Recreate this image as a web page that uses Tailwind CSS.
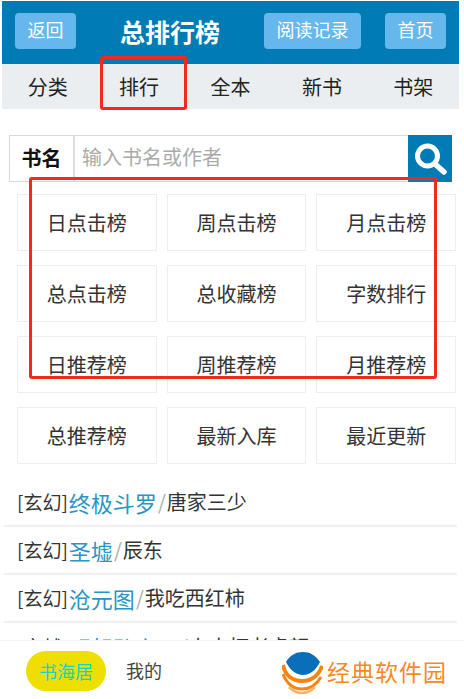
<!DOCTYPE html>
<html lang="zh">
<head>
<meta charset="utf-8">
<script src="https://cdn.jsdelivr.net/npm/@tailwindcss/browser@4"></script>
</head>
<body class="bg-white">
<div class="relative w-[464px] h-[699px] overflow-hidden font-['Noto_Sans_CJK_SC','Noto_Sans',sans-serif] text-[#333]">
  <div class="ml-[2px] mt-[1px] w-[457px] h-[63px] bg-[#007bb3] flex items-start pt-[12px]">
    <div class="ml-[13px] w-[61px] h-[36px] rounded-[4px] bg-[#66b8ec] text-white text-[18px] pb-[3px] flex items-center justify-center">返回</div>
    <div class="ml-[44px] w-[100px] h-[36px] text-white text-[25px] font-bold leading-[36px] text-center">总排行榜</div>
    <div class="ml-[44px] w-[97px] h-[36px] rounded-[4px] bg-[#66b8ec] text-white text-[18px] pb-[3px] flex items-center justify-center">阅读记录</div>
    <div class="ml-[24px] w-[61px] h-[36px] rounded-[4px] bg-[#66b8ec] text-white text-[18px] pb-[3px] flex items-center justify-center">首页</div>
  </div>
  <div class="ml-[2px] w-[457px] h-[45px] bg-[#ebeef0] grid grid-cols-5 text-[20px] text-[#222] items-center text-center leading-[43px]">
    <div>分类</div><div>排行</div><div>全本</div><div>新书</div><div>书架</div>
  </div>
  <div class="ml-[9px] mt-[26px] w-[443px] h-[47px] flex border border-[#d9d9d9]">
    <div class="w-[65px] shrink-0 border-r-2 border-[#ddd] pb-[2px] flex items-center justify-center text-[20px] font-bold text-[#111]">书名</div>
    <div class="flex-1 flex items-center pl-[7px] pb-[3px] text-[20px] text-[#aaa]">输入书名或作者</div>
    <div class="w-[44px] shrink-0 -my-px -mr-px bg-[#007bb3] flex items-center justify-center">
      <svg width="36" height="36" viewBox="0 0 36 36" fill="none">
        <circle cx="15.5" cy="15" r="10" stroke="#fff" stroke-width="5"/>
        <path d="M23 23l9 8" stroke="#fff" stroke-width="5.5" stroke-linecap="round"/>
      </svg>
    </div>
  </div>
  <div class="ml-[17px] mt-[12px] w-[439px] grid grid-cols-3 gap-x-[10px] gap-y-[14px] text-[20px] text-[#333]">
    <div class="h-[57px] border border-[#eee] flex items-center justify-center">日点击榜</div>
    <div class="h-[57px] border border-[#eee] flex items-center justify-center">周点击榜</div>
    <div class="h-[57px] border border-[#eee] flex items-center justify-center">月点击榜</div>
    <div class="h-[57px] border border-[#eee] flex items-center justify-center">总点击榜</div>
    <div class="h-[57px] border border-[#eee] flex items-center justify-center">总收藏榜</div>
    <div class="h-[57px] border border-[#eee] flex items-center justify-center">字数排行</div>
    <div class="h-[57px] border border-[#eee] flex items-center justify-center">日推荐榜</div>
    <div class="h-[57px] border border-[#eee] flex items-center justify-center">周推荐榜</div>
    <div class="h-[57px] border border-[#eee] flex items-center justify-center">月推荐榜</div>
    <div class="h-[57px] border border-[#eee] flex items-center justify-center">总推荐榜</div>
    <div class="h-[57px] border border-[#eee] flex items-center justify-center">最新入库</div>
    <div class="h-[57px] border border-[#eee] flex items-center justify-center">最近更新</div>
  </div>
  <div class="ml-[4px] mt-[15px] w-[453px] text-[20px]">
    <div class="h-[48px] border-b-2 border-[#f0f0f0] pl-[13px] flex items-center"><span class="text-[19px] mr-[1px]">[玄幻]</span><span class="text-[22px] text-[#2a95c5]">终极斗罗</span><span class="text-[#aaa] mx-[1px]">/</span><span>唐家三少</span></div>
    <div class="h-[48px] border-b-2 border-[#f0f0f0] pl-[13px] flex items-center"><span class="text-[19px] mr-[1px]">[玄幻]</span><span class="text-[22px] text-[#2a95c5]">圣墟</span><span class="text-[#aaa] mx-[1px]">/</span><span>辰东</span></div>
    <div class="h-[48px] border-b-2 border-[#f0f0f0] pl-[13px] flex items-center"><span class="text-[19px] mr-[1px]">[玄幻]</span><span class="text-[22px] text-[#2a95c5]">沧元图</span><span class="text-[#aaa] mx-[1px]">/</span><span>我吃西红柿</span></div>
    <div class="h-[48px] pl-[13px] flex items-center"><span class="text-[19px] mr-[1px]">[穿越]</span><span class="text-[22px] text-[#2a95c5]">明朝败家子</span><span class="text-[#aaa] mx-[1px]">/</span><span>上山打老虎额</span></div>
  </div>
  <div class="absolute left-0 top-[640px] w-[464px] h-[59px] bg-white border-t border-[#f3f3f3] flex items-center">
    <div class="ml-[26px] mt-[2px] w-[80px] h-[40px] rounded-full bg-[#efdf00] text-[#14d4c8] text-[18px] flex items-center justify-center">书海居</div>
    <div class="ml-[20px] text-[18px] text-[#444]">我的</div>
    <div class="ml-auto mr-[17px] mt-[6px] flex items-center gap-[4px]">
      <svg width="41" height="44" viewBox="0 0 41 44" fill="none">
        <path d="M4 11C8 4 14 1 21 1s12 3 17 10c-4 8-10 13-17 13S8 19 4 11z" fill="#0a6fb8"/>
        <path d="M1 14C3 24 10 30 20 30s17-6 20-15" stroke="#f58410" stroke-width="4"/>
        <path d="M1 23C5 33 12 38 20 38s15-5 19-12" stroke="#f58410" stroke-width="3"/>
        <path d="M7 36C11 40 15 42 20 42s9-2 13-6" stroke="#f8b26a" stroke-width="2.5"/>
      </svg>
      <span class="text-[23px] text-[#f58a1f] tracking-[1px] leading-none pb-[4px]">经典软件园</span>
    </div>
  </div>
  <div class="absolute left-[100px] top-[56px] w-[87px] h-[54px] border-[3px] border-[#f5281e] rounded-[3px]"></div>
  <div class="absolute left-[29px] top-[177px] w-[408px] h-[202px] border-[3px] border-[#f5281e] rounded-[3px]"></div>
</div>
</body>
</html>
